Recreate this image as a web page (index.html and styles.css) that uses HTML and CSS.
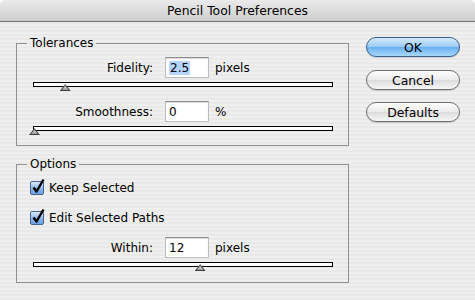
FILE: index.html
```html
<!DOCTYPE html>
<html lang="en">
<head>
  <meta charset="UTF-8">
  <title>Pencil Tool Preferences</title>
  <link rel="stylesheet" href="styles.css">
</head>
<body>

  <div class="window">
    <div class="titlebar">Pencil Tool Preferences</div>

    <div class="content">
      <div class="groups">

        <!-- Tolerances -->
        <fieldset class="group tolerances">
          <legend>Tolerances</legend>
          <div class="group-body">
            <div class="field first">
              <span class="field-label">Fidelity:</span>
              <div class="field-input"><span class="selected">2.5</span></div>
              <span class="unit">pixels</span>
            </div>
            <div class="slider"><span class="thumb" style="left: 10.3%"></span></div>

            <div class="field">
              <span class="field-label">Smoothness:</span>
              <div class="field-input">0</div>
              <span class="unit">%</span>
            </div>
            <div class="slider"><span class="thumb" style="left: 0%"></span></div>
          </div>
        </fieldset>

        <!-- Options -->
        <fieldset class="group options">
          <legend>Options</legend>
          <div class="group-body">
            <div class="check first">
              <span class="box">
                <svg width="16" height="17" viewBox="0 0 16 17"><path d="M3.5 9.5 L6.5 13.5 L13.5 1.5" fill="none" stroke="#000" stroke-width="2.4" stroke-linejoin="round"/></svg>
              </span>
              Keep Selected
            </div>
            <div class="check">
              <span class="box">
                <svg width="16" height="17" viewBox="0 0 16 17"><path d="M3.5 9.5 L6.5 13.5 L13.5 1.5" fill="none" stroke="#000" stroke-width="2.4" stroke-linejoin="round"/></svg>
              </span>
              Edit Selected Paths
            </div>

            <div class="field within">
              <span class="field-label">Within:</span>
              <div class="field-input">12</div>
              <span class="unit">pixels</span>
            </div>
            <div class="slider"><span class="thumb" style="left: 55.6%"></span></div>
          </div>
        </fieldset>

      </div>

      <div class="buttons">
        <button class="btn default">OK</button>
        <button class="btn">Cancel</button>
        <button class="btn defaults">Defaults</button>
      </div>
    </div>
  </div>

</body>
</html>
```

FILE: styles.css
```css
body {
  margin: 0;
  background-color: #fff;
  font-family: 'DejaVu Sans', sans-serif;
  font-size: 12px;
  color: #000;
}

.window {
  width: 475px;
  height: 300px;
  border-radius: 5px 5px 0 0;
  overflow: hidden;
  background: repeating-linear-gradient(#efefef 0 2px, #e9e9e9 2px 4px);
}

.titlebar {
  height: 21px;
  line-height: 21px;
  text-align: center;
  font-size: 12.4px;
  background: linear-gradient(#ebebeb, #cdcdcd);
  border-bottom: 1px solid #707070;
}

.content {
  display: flex;
}

.groups {
  margin-left: 16px;
  width: 333px;
}

/* Group boxes */
.group {
  margin: 0;
  padding: 0;
  border: 1px solid #8f8f8f;
  padding-bottom: 14px;
}

.group legend {
  margin-left: 10px;
  padding: 0 3px;
  line-height: 16px;
}

.tolerances {
  margin-top: 13px;
}

.options {
  margin-top: 10px;
  padding-bottom: 15px;
}

.group-body {
  padding: 0 16px;
}

/* Label + text field rows */
.field {
  display: flex;
  align-items: center;
  height: 21px;
  margin-top: 14px;
}

.field.first {
  margin-top: 6px;
}

.field.within {
  margin-top: 12px;
}

.field-label {
  width: 120px;
  text-align: right;
}

.field-input {
  box-sizing: border-box;
  width: 44px;
  height: 21px;
  margin-left: 12px;
  padding: 2px 0 0 3px;
  background-color: #fff;
  border: 1px solid #bdbdbd;
  border-top-color: #8c8c8c;
  box-shadow: inset 0 1px 1px rgba(0, 0, 0, 0.15);
  line-height: 16px;
}

.selected {
  background-color: #b5d5ff;
  padding: 0 1px;
}

.unit {
  margin-left: 6px;
}

/* Sliders */
.slider {
  position: relative;
  height: 3px;
  margin-top: 4px;
  margin-right: -1px;
  background-color: #fff;
  border: 1px solid #000;
}

.thumb {
  position: absolute;
  top: 1px;
  width: 11px;
  height: 7px;
  margin-left: -5px;
  background: linear-gradient(#6a6a6a, #3a3a3a);
  clip-path: polygon(50% 0, 100% 100%, 0 100%);
}

.thumb::after {
  content: "";
  position: absolute;
  left: 2px;
  right: 2px;
  top: 2px;
  bottom: 1px;
  background: linear-gradient(#d8d8d8, #9c9c9c);
  clip-path: polygon(50% 0, 100% 100%, 0 100%);
}

/* Checkboxes */
.check {
  display: flex;
  align-items: center;
  height: 15px;
  margin-top: 15px;
  margin-left: -3px;
}

.check.first {
  margin-top: 8px;
}

.box {
  position: relative;
  box-sizing: border-box;
  width: 14px;
  height: 14px;
  margin-right: 5px;
  border: 1px solid #47658c;
  border-radius: 2px;
  background: linear-gradient(#d9e8fa, #8bb6ea 55%, #6aa0e2);
}

.box svg {
  position: absolute;
  left: -1px;
  top: -4px;
}

/* Buttons */
.buttons {
  display: flex;
  flex-direction: column;
  margin-left: 17px;
  margin-top: 15px;
}

.btn {
  width: 94px;
  height: 20px;
  padding: 0;
  border: 1px solid #6f6f6f;
  border-radius: 10px;
  background: linear-gradient(#fdfdfd, #ececec 50%, #dcdcdc 51%, #f7f7f7);
  font-family: 'DejaVu Sans', sans-serif;
  font-size: 12.4px;
  color: #000;
  box-shadow: 0 1px 1px rgba(0, 0, 0, 0.15);
  margin-top: 13px;
}

.btn.default {
  margin-top: 0;
  border-color: #3a5f93;
  background: linear-gradient(#d4eafd, #9dcaf5 48%, #6ab0ef 52%, #a6d8fd);
}

.btn.defaults {
  margin-top: 12px;
}
```
